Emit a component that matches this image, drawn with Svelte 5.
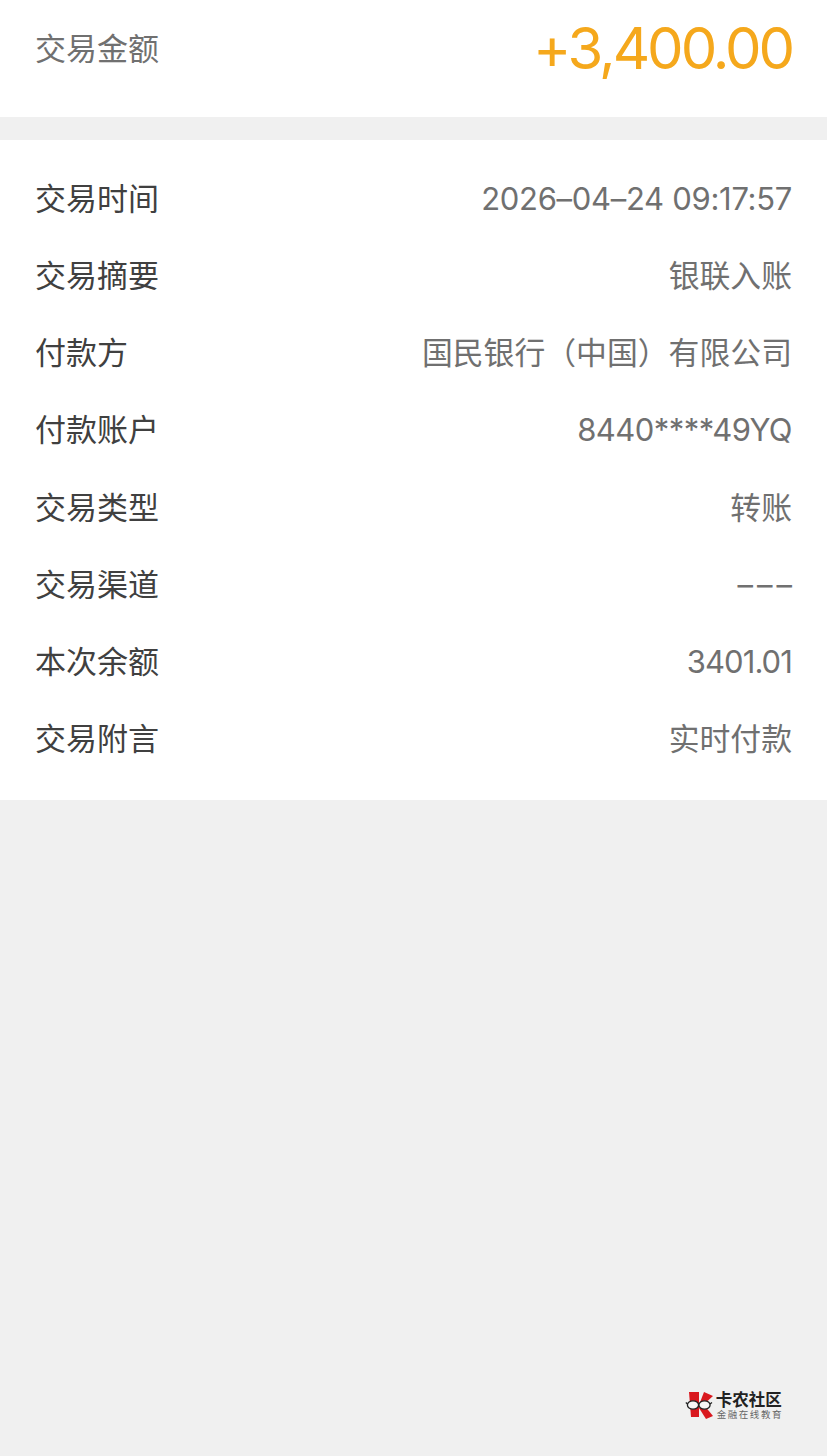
<script>
  const rows = [
    { label: '交易时间', value: '2026–04–24 09:17:57', kind: 'latin time' },
    { label: '交易摘要', value: '银联入账', kind: '' },
    { label: '付款方', value: '国民银行（中国）有限公司', kind: '' },
    { label: '付款账户', value: '8440****49YQ', kind: 'latin account' },
    { label: '交易类型', value: '转账', kind: '' },
    { label: '交易渠道', value: '–––', kind: 'latin dashes' },
    { label: '本次余额', value: '3401.01', kind: 'latin' },
    { label: '交易附言', value: '实时付款', kind: '' }
  ];
</script>

<div class="page">
  <section class="head">
    <span class="head-label">交易金额</span>
    <span class="amount">+3,400.00</span>
  </section>

  <section class="card">
    {#each rows as r}
      <div class="row">
        <span class="label">{r.label}</span>
        <span class="value {r.kind}">{r.value}</span>
      </div>
    {/each}
  </section>

  <div class="spacer">
    <div class="logo">
      <svg width="30" height="30" viewBox="0 0 30 30">
        <path d="M4 2h10v25H6z" fill="#d9181e" />
        <path d="M19 2l9 4-11 10-3-1z" fill="#d9181e" />
        <path d="M14 18l5-3 9 11-7 3z" fill="#d9181e" />
        <ellipse cx="8" cy="15" rx="5.6" ry="4.2" fill="#f6f6f6" stroke="#222" stroke-width="1.3" />
        <ellipse cx="19.5" cy="15" rx="5.6" ry="4.2" fill="#f6f6f6" stroke="#222" stroke-width="1.3" />
        <path d="M13.5 14.5h.5M2.5 14L0.8 12.5M25 14l2-1.5" stroke="#222" stroke-width="1.2" fill="none" />
      </svg>
      <div class="logo-text">
        <span class="logo-main">卡农社区</span>
        <span class="logo-sub">金融在线教育</span>
      </div>
    </div>
  </div>
</div>

<style>
  :global(body) {
    margin: 0;
    background: #f0f0f0;
  }

  .page {
    width: 827px;
    height: 1456px;
    display: flex;
    flex-direction: column;
    background: #f0f0f0;
    font-family: "Inter", "Noto Sans CJK SC", sans-serif;
    overflow: hidden;
  }

  .head {
    height: 117px;
    box-sizing: border-box;
    background: #fff;
    display: flex;
    justify-content: space-between;
    align-items: flex-start;
    padding: 0 35px;
  }

  .head-label {
    font-size: 31px;
    line-height: 40px;
    margin-top: 27px;
    color: #707070;
    font-family: "Noto Sans CJK SC", sans-serif;
    font-weight: 400;
  }

  .amount {
    font-size: 58px;
    line-height: 70px;
    margin-top: 13px;
    color: #f5a81c;
    font-weight: 370;
    letter-spacing: -3.05px;
  }

  .card {
    margin-top: 23px;
    background: #fff;
    padding: 20px 35px 23px;
  }

  .row {
    height: 77.15px;
    display: flex;
    justify-content: space-between;
    align-items: center;
  }

  .label {
    font-size: 31px;
    color: #404040;
    font-family: "Noto Sans CJK SC", sans-serif;
    font-weight: 400;
    padding-bottom: 4px;
  }

  .value {
    font-size: 30.85px;
    color: #707070;
    font-family: "Noto Sans CJK SC", sans-serif;
    font-weight: 400;
    padding-bottom: 4px;
  }

  .value.latin {
    font-size: 31px;
    font-family: "Inter", sans-serif;
    font-weight: 380;
    letter-spacing: -0.9px;
    padding-bottom: 0;
  }

  .value.time {
    letter-spacing: -0.3px;
  }

  .value.account {
    letter-spacing: -0.55px;
  }

  .value.dashes {
    letter-spacing: 4px;
    margin-right: -4px;
  }

  .spacer {
    flex: 1;
    display: flex;
    justify-content: flex-end;
    align-items: flex-end;
    padding: 0 44px 36px 0;
  }

  .logo {
    display: flex;
    align-items: center;
    gap: 1px;
  }

  .logo-text {
    display: flex;
    flex-direction: column;
    align-items: flex-start;
  }

  .logo-main {
    font-size: 16.5px;
    line-height: 17px;
    font-weight: 700;
    color: #222;
    font-family: "Noto Sans CJK SC", sans-serif;
  }

  .logo-sub {
    font-size: 9.5px;
    line-height: 12px;
    color: #666;
    letter-spacing: 1.55px;
    padding-left: 1px;
    font-family: "Noto Sans CJK SC", sans-serif;
  }
</style>
